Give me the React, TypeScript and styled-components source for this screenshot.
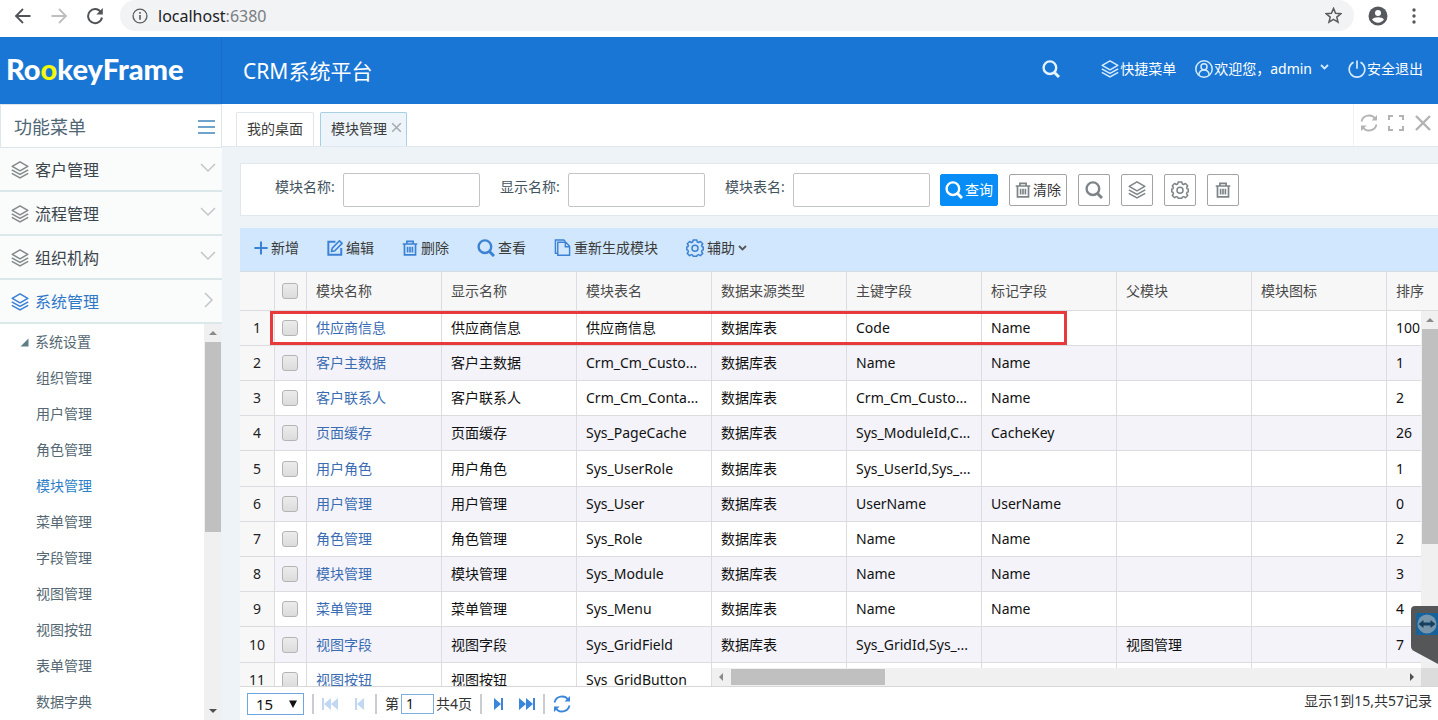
import React from "react";
import styled, { createGlobalStyle, css } from "styled-components";

const GlobalStyle = createGlobalStyle`
  *, *::before, *::after { box-sizing: border-box; }
  html, body, #root { height: 100%; }
  body {
    margin: 0;
    overflow: hidden;
    background: #eef3f7;
    color: #222;
    font: 14px/20px "Noto Sans", "Noto Sans CJK SC", sans-serif;
  }
  button, input, select { font: inherit; color: inherit; margin: 0; }
  button { padding: 0; border: 0; background: none; cursor: pointer; }
  a { color: inherit; text-decoration: none; }
  ul { list-style: none; margin: 0; padding: 0; }
  svg { display: block; flex: none; }
`;

/* ---------- icons ---------- */

type IconProps = { size?: number };

const Stroke = ({ size = 16, width = 1.5, children }: IconProps & { width?: number; children: React.ReactNode }) => (
  <svg width={size} height={size} viewBox="0 0 18 18" fill="none" stroke="currentColor" strokeWidth={width} aria-hidden="true">
    {children}
  </svg>
);

const LayersIcon = ({ size }: IconProps) => (
  <Stroke size={size} width={1.5}>
    <path d="M9 .8 16.800 5.300 9 9.800 1.200 5.300Z" strokeLinejoin="round" />
    <path d="M.8 8.800 9 13.400l8.200-4.600M.8 12.400 9 17l8.200-4.600" />
  </Stroke>
);
const SearchIcon = ({ size }: IconProps) => (
  <Stroke size={size} width={2.4}>
    <circle cx="7.900" cy="7.700" r="6.300" />
    <path d="m12.200 12.200 4.800 4.800" strokeWidth="3" />
  </Stroke>
);
const TrashIcon = ({ size }: IconProps) => (
  <Stroke size={size} width={1.900}>
    <path d="M.8 4.500h16.400M5.500 4V1.500h7V4M2.800 4.500v12.300h12.400V4.500M6.300 7.500v6.500M9 7.500v6.500M11.700 7.500v6.500" />
  </Stroke>
);
const GearIcon = ({ size }: IconProps) => (
  <Stroke size={size} width={1.500}>
    <path
      strokeLinejoin="round"
      d="M7.200 1h3.600l.5 2 1.300.5 1.800-1.100 2.300 2.400-1.100 1.700.5 1.200 1.200.3v2.900l-1.200.4-.5 1.300 1.100 1.800-2.300 2.300-1.800-1.100-1.300.5-.5 1.200H7.200l-.5-1.200-1.300-.5-1.800 1.100-2.300-2.300 1.100-1.800-.5-1.300L.8 10.900V8l1.100-.3.5-1.200-1.100-1.700 2.300-2.400 1.800 1.100L6.700 3Z"
    />
    <circle cx="9" cy="9.300" r="3" />
  </Stroke>
);
const PlusIcon = () => (
  <Stroke size={14} width={2.600}>
    <path d="M9 .5v17M.5 9h17" />
  </Stroke>
);
const EditIcon = () => (
  <Stroke size={16} width={2.200}>
    <path d="M9.500 2H1.500v14.500H16V9" />
    <path d="m5 13 .9-3.900L14 .9l3 2.900-8.200 8.300Z" strokeLinejoin="round" strokeWidth="1.800" />
  </Stroke>
);
const CopyIcon = () => (
  <Stroke size={17} width={1.500}>
    <path d="M4 15H1.500V1h9l1.600 1.800" />
    <path d="M4 3.500h8.500l4 4.200v9.500H4ZM12 3.500V8.200h4.500" />
  </Stroke>
);
const UserIcon = () => (
  <Stroke size={18}>
    <circle cx="9" cy="9" r="8.200" />
    <circle cx="9" cy="6.700" r="3" />
    <path d="M3.800 14.800c.5-3 2.200-4.700 5.200-4.700s4.700 1.700 5.200 4.700" />
  </Stroke>
);
const PowerIcon = () => (
  <Stroke size={18} width={1.700}>
    <path d="M9 .5v8.200M5.500 2.300a7.800 7.800 0 1 0 7 0" />
  </Stroke>
);
const RefreshIcon = () => (
  <Stroke size={18} width={1.800}>
    <path d="M1.500 7.500a7.600 7.600 0 0 1 14-2.200M16.500 10.500a7.600 7.600 0 0 1-14 2.200" />
    <path d="M17 1v5.500h-5.500ZM1 17v-5.500h5.500Z" fill="currentColor" stroke="none" />
  </Stroke>
);
const FullscreenIcon = () => (
  <Stroke size={18} width={2}>
    <path d="M2 6V2h4M12 2h4v4M16 12v4h-4M6 16H2v-4" />
  </Stroke>
);
const CloseIcon = ({ size = 18 }: IconProps) => (
  <Stroke size={size} width={2.400}>
    <path d="m2 2 14 14M16 2 2 16" />
  </Stroke>
);
const ChevronIcon = ({ open = false }: { open?: boolean }) => (
  <svg width="16" height="16" viewBox="0 0 16 16" fill="none" stroke="#c2c6c8" strokeWidth="1.500" aria-hidden="true">
    <path d={open ? "m5 1 7 7-7 7" : "m1 4 7 7 7-7"} />
  </svg>
);
const SmallChevron = () => (
  <svg width="9" height="6" viewBox="0 0 9 6" fill="none" stroke="currentColor" strokeWidth="1.800" aria-hidden="true">
    <path d="M1 1l3.500 3.500L8 1" />
  </svg>
);
const MenuIcon = () => (
  <svg width="17" height="14" viewBox="0 0 17 14" fill="#6fa3cb" aria-hidden="true">
    <path d="M0 0h17v2H0zM0 6h17v2H0zM0 12h17v2H0z" />
  </svg>
);
const arrows = {
  up: "M1 7 5 3l4 4Z",
  down: "M1 3l4 4 4-4Z",
  left: "M7 1 3 5l4 4Z",
  right: "M3 1l4 4-4 4Z",
};
const Arrow = ({ to, color = "#505050" }: { to: keyof typeof arrows; color?: string }) => (
  <svg width="10" height="10" viewBox="0 0 10 10" fill={color} aria-hidden="true">
    <path d={arrows[to]} />
  </svg>
);
const steps = {
  first: { w: 16, d: "M0 0h2v12H0zM9 0v12L2 6zM16 0v12L9 6z" },
  prev: { w: 9, d: "M0 0h2v12H0zM9 0v12L2 6z" },
  next: { w: 9, d: "M7 0h2v12H7zM0 0v12l7-6z" },
  last: { w: 16, d: "M14 0h2v12h-2zM0 0v12l7-6zM7 0v12l7-6z" },
};
const StepIcon = ({ kind }: { kind: keyof typeof steps }) => (
  <svg width={steps[kind].w} height="12" viewBox={`0 0 ${steps[kind].w} 12`} fill="currentColor" aria-hidden="true">
    <path d={steps[kind].d} />
  </svg>
);

/* ---------- browser bar ---------- */

const Page = styled.div`
  height: 100vh;
  display: flex;
  flex-direction: column;
`;
const BrowserBar = styled.div`
  flex: none;
  height: 37px;
  padding: 0 16px 6px 14px;
  display: flex;
  align-items: center;
  background: #fff;
  color: #5a5d61;
`;
const NavButton = styled.button`
  width: 18px;
  height: 18px;
  margin-right: 18px;
  color: ${(p) => (p.disabled ? "#bcbec0" : "#505357")};
`;
const Address = styled.div`
  flex: 1;
  height: 31px;
  margin: 0 14px 0 -2px;
  padding: 0 12px;
  display: flex;
  align-items: center;
  gap: 10px;
  border-radius: 16px;
  background: #f1f3f4;
`;
const Url = styled.span`
  flex: 1;
  font-size: 16px;
  color: #7a7d81;
  b { font-weight: 400; color: #202124; }
`;

/* ---------- application header ---------- */

const Header = styled.header`
  flex: none;
  height: 67px;
  display: flex;
  align-items: center;
  background: #1a76d5;
  color: #fff;
`;
const Logo = styled.div`
  flex: none;
  width: 222px;
  height: 100%;
  padding-left: 6px;
  border-right: 1px solid #186dc8;
  font: 900 29px/64px Lato, "Noto Sans", sans-serif;
  span { color: #f4f80a; }
`;
const SystemName = styled.h1`
  flex: 1;
  margin: 0 0 0 21px;
  font-size: 21px;
  font-weight: 400;
  line-height: 28px;
`;
const HeaderNav = styled.nav`
  display: flex;
  align-items: center;
  padding-right: 15px;
  margin-top: -4px;
  gap: 19px;
`;
const HeaderLink = styled.a`
  display: flex;
  align-items: center;
  gap: 1px;
  svg { color: #d4ebff; }
  span + svg { margin: -4px 0 0 7px; }
`;
const HeaderSearch = styled.button`
  margin-right: 22px;
  color: #e6f4ff;
`;

/* ---------- sidebar ---------- */

const Body = styled.div`
  flex: 1;
  min-height: 0;
  display: flex;
`;
const Sidebar = styled.aside`
  flex: none;
  width: 222px;
  display: flex;
  flex-direction: column;
  background: #fff;
`;
const SidebarTitle = styled.div`
  height: 44px;
  padding: 2px 6px 0 13px;
  display: flex;
  align-items: center;
  justify-content: space-between;
  border: 1px solid #dfe6ea;
  font-size: 18px;
  color: #4f6675;
`;
const Section = styled.button<{ $active?: boolean }>`
  flex: none;
  height: 44px;
  padding: 1px 6px 0 11px;
  display: flex;
  align-items: center;
  gap: 6px;
  border-bottom: 2px solid #dbe8ea;
  background: #fafbfb;
  font-size: 16px;
  text-align: left;
  color: ${(p) => (p.$active ? "#2e78c8" : "#3b454c")};
  > svg:first-child { color: ${(p) => (p.$active ? "#3a80d8" : "#84898c")}; }
  > svg:last-child { margin-top: -4px; }
  span { flex: 1; }
`;
const TreeArea = styled.div`
  flex: 1;
  min-height: 0;
  display: flex;
  overflow: hidden;
`;
const Tree = styled.ul`
  flex: 1;
  color: #546772;
`;
const TreeItem = styled.li<{ $active?: boolean; $root?: boolean }>`
  height: 36px;
  display: flex;
  align-items: center;
  gap: 6px;
  padding-left: ${(p) => (p.$root ? 20 : 36)}px;
  ${(p) => p.$active && css`color: #2d7fc8;`}
`;

/* ---------- scroll bars ---------- */

const ScrollBar = styled.div<{ $horizontal?: boolean }>`
  flex: none;
  display: flex;
  flex-direction: ${(p) => (p.$horizontal ? "row" : "column")};
  align-items: ${(p) => (p.$horizontal ? "stretch" : "center")};
  background: #f0f0f0;
`;
const ScrollEnd = styled.div`
  flex: none;
  width: 18px;
  height: 18px;
  display: flex;
  align-items: center;
  justify-content: center;
`;
const ScrollTrack = styled.div<{ $horizontal?: boolean }>`
  flex: 1;
  display: flex;
  flex-direction: ${(p) => (p.$horizontal ? "row" : "column")};
  padding: ${(p) => (p.$horizontal ? "1px" : "0")};
`;
const Thumb = styled.div<{ $length: number; $horizontal?: boolean }>`
  background: #c0c0c0;
  ${(p) => (p.$horizontal ? css`width: ${p.$length}px;` : css`width: 16px; height: ${p.$length}px;`)}
`;

/* ---------- tabs ---------- */

const Main = styled.main`
  flex: 1;
  min-width: 0;
  display: flex;
  flex-direction: column;
`;
const TabBar = styled.div`
  flex: none;
  height: 43px;
  padding: 8px 0 0 14px;
  display: flex;
  gap: 6px;
  background: #fff;
  border-bottom: 1px solid #dfe8ee;
`;
const Tab = styled.button<{ $active?: boolean }>`
  padding: 0 10px 2px;
  display: flex;
  align-items: center;
  gap: 4px;
  border: 1px solid ${(p) => (p.$active ? "#a9cfe2" : "#e0e6ea")};
  border-bottom: 0;
  border-radius: 2px 2px 0 0;
  background: ${(p) => (p.$active ? "#edf4fa" : "#fff")};
  color: #3c3c3c;
  padding-right: ${(p) => (p.$active ? 4 : 10)}px;
  svg { color: #a4aaae; margin-top: -3px; }
`;
const TabTools = styled.div`
  margin: -8px 0 0 auto;
  padding: 0 6px 4px;
  display: flex;
  align-items: center;
  gap: 9px;
  border-left: 1px solid #f0f2f4;
  color: #b3b3b3;
  button { height: 18px; }
`;

/* ---------- search form ---------- */

const Content = styled.div`
  flex: 1;
  min-height: 0;
  padding: 16px 0 0 18px;
  display: flex;
  flex-direction: column;
  gap: 12px;
`;
const SearchForm = styled.form`
  flex: none;
  height: 53px;
  padding: 1px 34px 0;
  display: flex;
  align-items: center;
  border: 1px solid #e2e7eb;
  border-right: 0;
  background: #fff;
  white-space: nowrap;
`;
const Field = styled.label`
  flex: none;
  display: flex;
  margin-right: 20px;
  color: #44545f;
  span { width: 68px; padding-top: 4px; }
  &:last-of-type { margin-right: 10px; }
`;
const TextBox = styled.input`
  width: 137px;
  height: 34px;
  padding: 0 6px;
  border: 1px solid #c3c3ca;
  border-radius: 2px;
  background: #fff;
`;
const FormButton = styled.button<{ $primary?: boolean }>`
  flex: none;
  height: 32px;
  min-width: 32px;
  margin-right: 11px;
  padding: 0 5px;
  display: flex;
  align-items: center;
  justify-content: center;
  gap: 2px;
  border: 1px solid #a3a3a3;
  border-radius: 2px;
  color: #333;
  svg { color: #7d8488; }
  ${(p) =>
    p.$primary &&
    css`
      padding: 0 4px;
      border-color: #078df5;
      background: #078df5;
      color: #fff;
      svg { color: #fff; }
    `}
`;

/* ---------- data grid ---------- */

const GridPanel = styled.section`
  flex: 1;
  min-height: 0;
  display: flex;
  flex-direction: column;
  background: #fff;
`;
const Toolbar = styled.div`
  flex: none;
  height: 44px;
  padding: 0 14px 4px;
  display: flex;
  align-items: center;
  gap: 28px;
  background: #d0e7fd;
  border-bottom: 1px solid #d5dde3;
`;
const ToolButton = styled.button`
  flex: none;
  display: flex;
  align-items: center;
  gap: 3px;
  color: #3a3a3a;
  svg { color: #3c82d4; }
  span + svg { color: #555; }
`;
const Panes = styled.div`
  position: relative;
  flex: 1;
  min-height: 0;
  display: flex;
  overflow: hidden;
`;
const FrozenPane = styled.div`
  flex: none;
  width: 472px;
  overflow: hidden;
`;
const ScrollPane = styled.div`
  flex: 1;
  min-width: 0;
  display: grid;
  grid-template: 39px minmax(0, 1fr) 18px / minmax(0, 1fr) 17px;
`;
const PaneHead = styled.div`
  grid-column: 1 / -1;
  overflow: hidden;
  background: #f7f7f7;
  border-bottom: 1px solid #dcdcdc;
`;
const PaneBody = styled.div`
  overflow: hidden;
`;
const Corner = styled.div`
  background: #dcdcdc;
`;
const Table = styled.table`
  table-layout: fixed;
  width: 0;
  border-collapse: separate;
  border-spacing: 0;
  th, td {
    padding: 0 9px;
    border-right: 1px solid #dcdce2;
    border-bottom: 1px solid #dcdcde;
    font-weight: 400;
    text-align: left;
    white-space: nowrap;
    overflow: hidden;
    text-overflow: ellipsis;
  }
`;
const HeadRow = styled.tr`
  height: 39px;
  background: #f7f7f7;
  color: #4a4a4a;
`;
const DataRow = styled.tr<{ $even: boolean }>`
  height: 35px;
  background: ${(p) => (p.$even ? "#f3f3f9" : "#fff")};
  color: #111;
  &:nth-child(5n) { height: 36px; }
`;
const NumberCell = styled.td`
  && { padding: 0; text-align: center; background: #f7f7f7; color: #222; }
`;
const CheckCell = styled.td`
  && { padding: 0 0 0 7px; }
`;
const CheckBox = styled.input.attrs({ type: "checkbox" })`
  appearance: none;
  display: block;
  width: 16px;
  height: 16px;
  border: 1px solid #b4b4b4;
  border-radius: 3px;
  background: linear-gradient(#ececec, #dcdcdc);
`;
const RowLink = styled.a`
  color: #3a6cb4;
`;
const Highlight = styled.div`
  position: absolute;
  left: 30px;
  top: 39px;
  width: 797px;
  height: 34px;
  border: 3px solid #e8393c;
  pointer-events: none;
`;

/* ---------- pager ---------- */

const Pager = styled.footer`
  flex: none;
  height: 34px;
  padding: 0 6px 0 7px;
  display: flex;
  align-items: center;
  border-top: 1px solid #d8d8d8;
  background: #fff;
  color: #333;
`;
const SizePicker = styled.div`
  position: relative;
  margin-right: 1px;
  select {
    appearance: none;
    display: block;
    width: 57px;
    height: 22px;
    padding: 0 8px;
    border: 1px solid #6fa6dd;
    border-radius: 0;
    background: #fff;
    font-size: 15px;
    line-height: 18px;
    color: #111;
  }
  svg { position: absolute; right: 6px; top: 6px; }
`;
const Divider = styled.i`
  width: 2px;
  height: 20px;
  margin: 0 7px;
  background: #c9ccd0;
`;
const PagerButton = styled.button`
  height: 18px;
  min-width: 16px;
  margin: 0 1px;
  display: flex;
  align-items: center;
  justify-content: center;
  color: ${(p) => (p.disabled ? "#c1d7f2" : "#3a86dc")};
  & + & { margin-left: 12px; }
`;
const PageLabel = styled.label`
  display: flex;
  align-items: center;
  gap: 2px;
  margin: 0 1px;
  input {
    width: 33px;
    height: 20px;
    padding: 0 4px;
    border: 1px solid #7eaede;
    color: #111;
  }
`;
const Summary = styled.span`
  margin-left: auto;
  padding-bottom: 5px;
`;

const RemoteBadge = styled.div`
  position: absolute;
  right: 0;
  bottom: 56px;
`;

/* ---------- data ---------- */

const sections = ["客户管理", "流程管理", "组织机构", "系统管理"];
const treeItems = ["组织管理", "用户管理", "角色管理", "模块管理", "菜单管理", "字段管理", "视图管理", "视图按钮", "表单管理", "数据字典"];
const frozenColumns = ["模块名称", "显示名称", "模块表名"];
const columns = ["数据来源类型", "主键字段", "标记字段", "父模块", "模块图标", "排序"];
type Row = { name: string; table: string; source?: string; key?: string; mark?: string; parent?: string; order?: number };
const source = "数据库表";
const rows: Row[] = [
  { name: "供应商信息", table: "供应商信息", source, key: "Code", mark: "Name", order: 100 },
  { name: "客户主数据", table: "Crm_Cm_Custo...", source, key: "Name", mark: "Name", order: 1 },
  { name: "客户联系人", table: "Crm_Cm_Conta...", source, key: "Crm_Cm_Custo...", mark: "Name", order: 2 },
  { name: "页面缓存", table: "Sys_PageCache", source, key: "Sys_ModuleId,C...", mark: "CacheKey", order: 26 },
  { name: "用户角色", table: "Sys_UserRole", source, key: "Sys_UserId,Sys_...", order: 1 },
  { name: "用户管理", table: "Sys_User", source, key: "UserName", mark: "UserName", order: 0 },
  { name: "角色管理", table: "Sys_Role", source, key: "Name", mark: "Name", order: 2 },
  { name: "模块管理", table: "Sys_Module", source, key: "Name", mark: "Name", order: 3 },
  { name: "菜单管理", table: "Sys_Menu", source, key: "Name", mark: "Name", order: 4 },
  { name: "视图字段", table: "Sys_GridField", source, key: "Sys_GridId,Sys_...", parent: "视图管理", order: 7 },
  { name: "视图按钮", table: "Sys_GridButton" },
];

const FrozenCols = () => (
  <colgroup>
    <col style={{ width: 35 }} />
    <col style={{ width: 32 }} />
    {frozenColumns.map((c) => (
      <col key={c} style={{ width: 135 }} />
    ))}
  </colgroup>
);
const ScrollCols = () => (
  <colgroup>
    {columns.map((c) => (
      <col key={c} style={{ width: 135 }} />
    ))}
  </colgroup>
);

export default function App() {
  return (
    <>
      <GlobalStyle />
      <Page>
        <BrowserBar>
          <NavButton aria-label="后退">
            <Stroke size={18} width={1.800}><path d="M16.500 9H2M9 2 2 9l7 7" /></Stroke>
          </NavButton>
          <NavButton aria-label="前进" disabled>
            <Stroke size={18} width={1.800}><path d="M1.500 9H16M9 2l7 7-7 7" /></Stroke>
          </NavButton>
          <NavButton aria-label="刷新">
            <Stroke size={18} width={2}>
              <path d="M14.800 5A7 7 0 1 0 16 10.500" />
              <path d="M16.800 1v6.500h-6.500Z" fill="currentColor" stroke="none" />
            </Stroke>
          </NavButton>
          <Address>
            <Stroke size={16}>
              <circle cx="9" cy="9" r="7.800" />
              <path d="M9 8v5.200M9 4.600v1.900" strokeWidth="1.800" />
            </Stroke>
            <Url><b>localhost</b>:6380</Url>
            <Stroke size={17} width={1.600}>
              <path d="m9 1.500 2.200 5.100 5.500.5-4.200 3.600 1.300 5.400L9 13.200l-4.800 2.900 1.300-5.400L1.300 7.100l5.500-.5Z" />
            </Stroke>
          </Address>
          <svg width="20" height="20" viewBox="0 0 20 20" aria-hidden="true">
            <circle cx="10" cy="10" r="9.500" fill="#55585c" />
            <circle cx="10" cy="7" r="3" fill="#fff" />
            <path d="M4 13.500c1.200-1.600 3.400-2.300 6-2.300s4.800.7 6 2.300c-1.400 2-3.500 3.200-6 3.200s-4.600-1.200-6-3.200Z" fill="#fff" />
          </svg>
          <svg width="34" height="16" viewBox="0 0 34 16" fill="#55585c" aria-hidden="true">
            <circle cx="26" cy="2" r="1.700" />
            <circle cx="26" cy="8" r="1.700" />
            <circle cx="26" cy="14" r="1.700" />
          </svg>
        </BrowserBar>

        <Header>
          <Logo>Ro<span>o</span>keyFrame</Logo>
          <SystemName>CRM系统平台</SystemName>
          <HeaderNav>
            <HeaderSearch aria-label="搜索"><SearchIcon size={18} /></HeaderSearch>
            <HeaderLink href="#"><LayersIcon size={18} /><span>快捷菜单</span></HeaderLink>
            <HeaderLink href="#"><UserIcon /><span>欢迎您，admin</span><SmallChevron /></HeaderLink>
            <HeaderLink href="#"><PowerIcon /><span>安全退出</span></HeaderLink>
          </HeaderNav>
        </Header>

        <Body>
          <Sidebar>
            <SidebarTitle>功能菜单<MenuIcon /></SidebarTitle>
            {sections.map((name, i) => (
              <Section key={name} $active={i === 3}>
                <LayersIcon size={18} />
                <span>{name}</span>
                <ChevronIcon open={i === 3} />
              </Section>
            ))}
            <TreeArea>
              <Tree>
                <TreeItem $root>
                  <svg width="9" height="9" viewBox="0 0 9 9" fill="#5c7f86" aria-hidden="true"><path d="M8.500.5v8h-8Z" /></svg>
                  系统设置
                </TreeItem>
                {treeItems.map((name) => (
                  <TreeItem key={name} $active={name === "模块管理"}>
                    <a href="#">{name}</a>
                  </TreeItem>
                ))}
              </Tree>
              <ScrollBar>
                <ScrollEnd><Arrow to="up" color="#8a8a8a" /></ScrollEnd>
                <ScrollTrack><Thumb $length={190} /></ScrollTrack>
                <ScrollEnd><Arrow to="down" /></ScrollEnd>
              </ScrollBar>
            </TreeArea>
          </Sidebar>

          <Main>
            <TabBar>
              <Tab>我的桌面</Tab>
              <Tab $active>模块管理<CloseIcon size={11} /></Tab>
              <TabTools>
                <button aria-label="刷新"><RefreshIcon /></button>
                <button aria-label="全屏"><FullscreenIcon /></button>
                <button aria-label="关闭"><CloseIcon /></button>
              </TabTools>
            </TabBar>

            <Content>
              <SearchForm onSubmit={(e) => e.preventDefault()}>
                {["模块名称", "显示名称", "模块表名"].map((name) => (
                  <Field key={name}><span>{name}:</span><TextBox /></Field>
                ))}
                <FormButton $primary><SearchIcon size={18} />查询</FormButton>
                <FormButton type="button"><TrashIcon size={16} />清除</FormButton>
                <FormButton type="button" aria-label="高级搜索"><SearchIcon size={18} /></FormButton>
                <FormButton type="button" aria-label="视图"><LayersIcon size={18} /></FormButton>
                <FormButton type="button" aria-label="设置"><GearIcon size={18} /></FormButton>
                <FormButton type="button" aria-label="回收站"><TrashIcon size={16} /></FormButton>
              </SearchForm>

              <GridPanel>
                <Toolbar>
                  <ToolButton><PlusIcon /><span>新增</span></ToolButton>
                  <ToolButton><EditIcon /><span>编辑</span></ToolButton>
                  <ToolButton><TrashIcon size={16} /><span>删除</span></ToolButton>
                  <ToolButton><SearchIcon size={18} /><span>查看</span></ToolButton>
                  <ToolButton><CopyIcon /><span>重新生成模块</span></ToolButton>
                  <ToolButton><GearIcon size={18} /><span>辅助</span><SmallChevron /></ToolButton>
                </Toolbar>

                <Panes>
                  <FrozenPane>
                    <Table>
                      <FrozenCols />
                      <thead>
                        <HeadRow>
                          <th />
                          <CheckCell as="th"><CheckBox aria-label="全选" /></CheckCell>
                          {frozenColumns.map((c) => <th key={c}>{c}</th>)}
                        </HeadRow>
                      </thead>
                      <tbody>
                        {rows.map((r, i) => (
                          <DataRow key={r.name} $even={i % 2 === 1}>
                            <NumberCell>{i + 1}</NumberCell>
                            <CheckCell><CheckBox aria-label={r.name} /></CheckCell>
                            <td><RowLink href="#">{r.name}</RowLink></td>
                            <td>{r.name}</td>
                            <td>{r.table}</td>
                          </DataRow>
                        ))}
                      </tbody>
                    </Table>
                  </FrozenPane>
                  <ScrollPane>
                    <PaneHead>
                      <Table>
                        <ScrollCols />
                        <thead><HeadRow>{columns.map((c) => <th key={c}>{c}</th>)}</HeadRow></thead>
                      </Table>
                    </PaneHead>
                    <PaneBody>
                      <Table>
                        <ScrollCols />
                        <tbody>
                          {rows.map((r, i) => (
                            <DataRow key={r.name} $even={i % 2 === 1}>
                              <td>{r.source}</td>
                              <td>{r.key}</td>
                              <td>{r.mark}</td>
                              <td>{r.parent}</td>
                              <td />
                              <td>{r.order}</td>
                            </DataRow>
                          ))}
                        </tbody>
                      </Table>
                    </PaneBody>
                    <ScrollBar>
                      <ScrollEnd><Arrow to="up" color="#8a8a8a" /></ScrollEnd>
                      <ScrollTrack><Thumb $length={215} /></ScrollTrack>
                    </ScrollBar>
                    <ScrollBar $horizontal>
                      <ScrollEnd><Arrow to="left" color="#8a8a8a" /></ScrollEnd>
                      <ScrollTrack $horizontal><Thumb $horizontal $length={154} /></ScrollTrack>
                      <ScrollEnd><Arrow to="right" /></ScrollEnd>
                    </ScrollBar>
                    <Corner />
                  </ScrollPane>
                  <Highlight />
                </Panes>

                <Pager>
                  <SizePicker>
                    <select aria-label="每页条数" defaultValue="15"><option>15</option></select>
                    <svg width="10" height="10" viewBox="0 0 10 10"><path d="M1 1.500h8L5 9Z" fill="#111" /></svg>
                  </SizePicker>
                  <Divider />
                  <PagerButton aria-label="首页" disabled><StepIcon kind="first" /></PagerButton>
                  <PagerButton aria-label="上一页" disabled><StepIcon kind="prev" /></PagerButton>
                  <Divider />
                  <PageLabel>第<input defaultValue="1" />共4页</PageLabel>
                  <Divider />
                  <PagerButton aria-label="下一页"><StepIcon kind="next" /></PagerButton>
                  <PagerButton aria-label="末页"><StepIcon kind="last" /></PagerButton>
                  <Divider />
                  <PagerButton aria-label="刷新"><RefreshIcon /></PagerButton>
                  <Summary>显示1到15,共57记录</Summary>
                </Pager>
              </GridPanel>
            </Content>
          </Main>
        </Body>
      </Page>
      <RemoteBadge>
        <svg width="27" height="58" viewBox="0 0 27 58" aria-hidden="true">
          <path d="M4 0h23v58L3 45q-3-1.500-3-5V4q0-4 4-4Z" fill="#555657" />
          <path d="M5 7h22v22H5Z" fill="#15629c" />
          <circle cx="16" cy="18" r="9.500" fill="#7695aa" />
          <path d="m7.500 18 5-4v2.500h7V14l5 4-5 4v-2.500h-7V22Z" fill="#173f60" />
        </svg>
      </RemoteBadge>
    </>
  );
}
